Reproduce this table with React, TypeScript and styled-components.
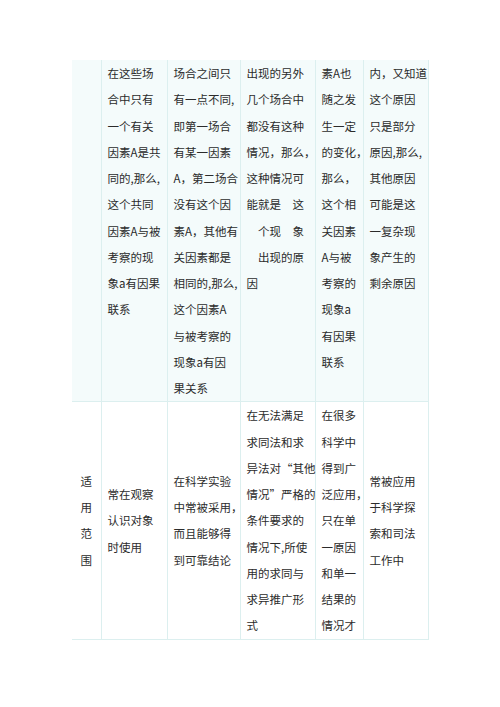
import React from 'react';
import styled, { createGlobalStyle } from 'styled-components';

const GlobalStyle = createGlobalStyle`
  html, body {
    margin: 0;
    padding: 0;
    background: #ffffff;
  }
`;

const Page = styled.div`
  padding: 60px 0 0 72px;
  width: 500px;
  height: 707px;
  box-sizing: border-box;
`;

const Table = styled.table`
  width: 356px;
  table-layout: fixed;
  border-collapse: collapse;
  font-family: "Noto Sans CJK SC", "Noto Sans", sans-serif;
  font-size: 11.5px;
  line-height: 26.25px;
  color: #2b2b2b;
`;

const Row = styled.tr<{ $shaded?: boolean }>`
  background: ${(p) => (p.$shaded ? '#f4fbfb' : '#ffffff')};
`;

const Cell = styled.td<{ $middle?: boolean; $center?: boolean; $first?: boolean }>`
  padding: 0 0 0 ${(p) => (p.$center ? '0' : '6px')};
  vertical-align: ${(p) => (p.$middle ? 'middle' : 'top')};
  text-align: ${(p) => (p.$center ? 'center' : 'left')};
  border: 1px solid #dcefef;
  border-top: none;
  border-left: ${(p) => (p.$first ? 'none' : '1px solid #dcefef')};
  white-space: nowrap;
  overflow: visible;
`;

const Line = styled.div`
  height: 26.25px;
`;

const widths = [29, 66, 73, 75, 48, 65];

const upper: string[][] = [
  [],
  ['在这些场', '合中只有', '一个有关', '因素A是共', '同的,那么,', '这个共同', '因素A与被', '考察的现', '象a有因果', '联系'],
  ['场合之间只', '有一点不同,', '即第一场合', '有某一因素', 'A，第二场合', '没有这个因', '素A，其他有', '关因素都是', '相同的,那么,', '这个因素A', '与被考察的', '现象a有因', '果关系'],
  ['出现的另外', '几个场合中', '都没有这种', '情况，那么，', '这种情况可', '能就是　这', '　个现　象', '　出现的原', '因'],
  ['素A也', '随之发', '生一定', '的变化，', '那么，', '这个相', '关因素', 'A与被', '考察的', '现象a', '有因果', '联系'],
  ['内，又知道', '这个原因', '只是部分', '原因,那么,', '其他原因', '可能是这', '一复杂现', '象产生的', '剩余原因'],
];

const lower: string[][] = [
  ['适', '用', '范', '围'],
  ['常在观察', '认识对象', '时使用'],
  ['在科学实验', '中常被采用，', '而且能够得', '到可靠结论'],
  ['在无法满足', '求同法和求', '异法对“其他', '情况”严格的', '条件要求的', '情况下,所使', '用的求同与', '求异推广形', '式'],
  ['在很多', '科学中', '得到广', '泛应用，', '只在单', '一原因', '和单一', '结果的', '情况才'],
  ['常被应用', '于科学探', '索和司法', '工作中'],
];

function Lines({ items }: { items: string[] }) {
  return (
    <>
      {items.map((t, i) => (
        <Line key={i}>{t}</Line>
      ))}
    </>
  );
}

function App() {
  return (
    <Page>
      <GlobalStyle />
      <Table>
        <colgroup>
          {widths.map((w, i) => (
            <col key={i} style={{ width: w }} />
          ))}
        </colgroup>
        <tbody>
          <Row $shaded>
            {upper.map((items, i) => (
              <Cell key={i} $first={i === 0}>
                <Lines items={items} />
              </Cell>
            ))}
          </Row>
          <Row>
            {lower.map((items, i) => (
              <Cell key={i} $first={i === 0} $middle={i !== 3 && i !== 4} $center={i === 0}>
                <Lines items={items} />
              </Cell>
            ))}
          </Row>
        </tbody>
      </Table>
    </Page>
  );
}

export default App;
